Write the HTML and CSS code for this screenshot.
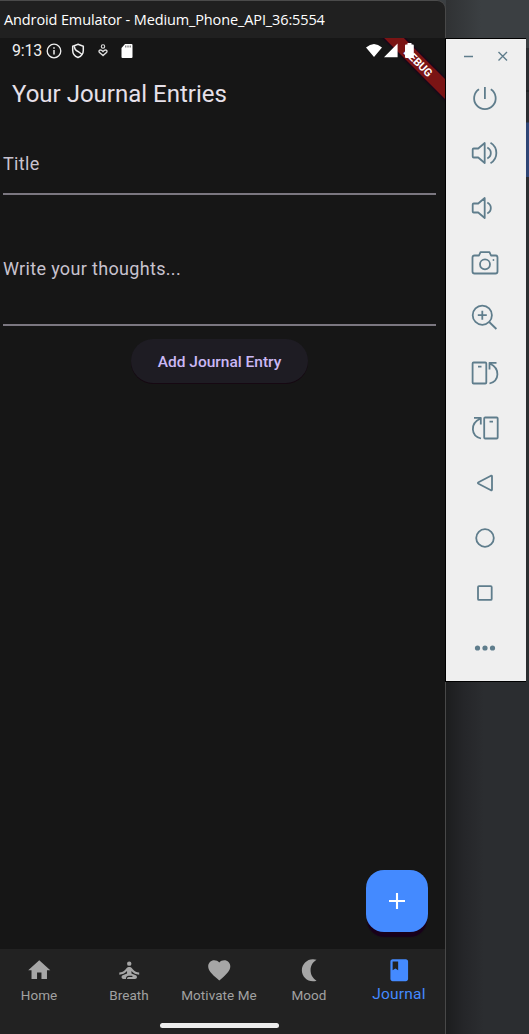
FILE: index.html
```html
<!DOCTYPE html>
<html lang="en">
<head>
<meta charset="utf-8">
<title>Android Emulator</title>
<link rel="stylesheet" href="styles.css">
</head>
<body>
<div class="desktop">
  <main class="window">
    <header class="titlebar"><span>Android Emulator - Medium_Phone_API_36:5554</span></header>
    <div class="screen">
      <div class="debug"><span>DEBUG</span></div>
      <div class="status">
        <span class="clock">9:13</span>
        <svg class="s-info" width="16" height="16" viewBox="0 0 16 16"><circle cx="8" cy="8" r="6.800" fill="none" stroke="#eee" stroke-width="1.300"/><path d="M8 7v4.600M8 4.200v1.500" stroke="#eee" stroke-width="1.500"/></svg>
        <svg class="s-shield" width="14" height="16" viewBox="0 0 14 16"><path d="M7 1.200l5.300 2v4.300c0 3.300-2.200 5.800-5.300 7C3.900 13.300 1.700 10.800 1.700 7.500V3.200zM3.500 3.500q0 3.500 3.500 5l3.500 2.500" fill="none" stroke="#eee" stroke-width="1.500"/></svg>
        <svg class="s-heart" width="10" height="13" viewBox="0 0 10 13"><circle cx="5" cy="2.500" r="1.700" fill="none" stroke="#ddd" stroke-width="1.100"/><path d="M5 11.500L1.300 8.200C.2 6.500 2.500 4.800 5 7.500 7.500 4.800 9.800 6.500 8.700 8.200z" fill="none" stroke="#ddd" stroke-width="1.400"/></svg>
        <svg class="s-card" width="12" height="14" viewBox="0 0 12 14"><path d="M4 0h6.500Q11.500 0 11.500 1v12q0 1-1 1h-9q-1 0-1-1V4z" fill="#fff"/><path d="M4.800 1.500v2M7 1.500v2M9.200 1.500v2" stroke="#555" stroke-width="1"/></svg>
        <span class="spacer"></span>
        <svg width="32" height="16" viewBox="0 0 32 16"><path d="M0 4.600Q8-2.400 16 4.600L8 14zM18 14.200L31.600 .6v13.600z" fill="#fff"/></svg>
        <svg class="s-bat" width="9" height="16" viewBox="0 0 9 16"><path d="M2.500 0h4v1.500H8q.8 0 .8 1V14q0 1-1 1H1q-1 0-1-1V2.500q0-1 1-1h1.500z" fill="#fff"/></svg>
      </div>
      <h1 class="heading"><span>Your Journal Entries</span></h1>
      <form class="entry">
        <label class="field field-title"><span>Title</span></label>
        <label class="field field-body"><span>Write your thoughts...</span></label>
        <button class="add" type="button"><span>Add Journal Entry</span></button>
      </form>
      <div class="content">
        <button class="fab" type="button" aria-label="Add"><svg width="16" height="16" viewBox="0 0 16 16"><path d="M8 0v16M0 8h16" stroke="#fff" stroke-width="2.100"/></svg></button>
      </div>
      <nav class="nav">
        <div class="tabs">
          <div class="tab"><svg viewBox="0 0 24 24"><path d="M10 20v-6h4v6h5v-8h3L12 3 2 12h3v8z"/></svg><span>Home</span></div>
          <div class="tab"><svg viewBox="0 0 24 24"><circle cx="12" cy="6" r="2"/><path d="M21 16v-2c-2.240 0-4.160-.960-5.600-2.680l-1.340-1.600A1.980 1.980 0 0 0 12.530 9h-1.050c-.610 0-1.170.260-1.550.720l-1.340 1.600C7.160 13.040 5.240 14 3 14v2c2.770 0 5.190-1.170 7-3.250V15l-3.880 1.550C5.450 16.820 5 17.480 5 18.210 5 19.200 5.800 20 6.790 20H9v-.5c0-1.380 1.120-2.500 2.500-2.500h3c.280 0 .5.220.5.5s-.220.5-.5.5h-3c-.830 0-1.500.670-1.500 1.500v.5h7.210c.990 0 1.790-.8 1.790-1.790 0-.730-.450-1.390-1.120-1.660L14 15v-2.250c1.810 2.080 4.230 3.250 7 3.250z"/></svg><span>Breath</span></div>
          <div class="tab"><svg viewBox="0 0 24 24"><path d="M12 21.350l-1.450-1.320C5.400 15.360 2 12.280 2 8.500 2 5.420 4.420 3 7.500 3c1.740 0 3.410.810 4.500 2.090C13.090 3.810 14.760 3 16.500 3 19.580 3 22 5.420 22 8.500c0 3.780-3.400 6.860-8.550 11.540z"/></svg><span>Motivate Me</span></div>
          <div class="tab"><svg viewBox="0 0 24 24"><path d="M15.300 2c1.200 0 2.300.2 3.300.6-3.300 2-5.400 5.400-5.400 9.400s2.100 7.400 5.400 9.400c-1 .4-2.100.6-3.300.6-5.500 0-10-4.500-10-10s4.500-10 10-10z"/></svg><span>Mood</span></div>
          <div class="tab active"><svg viewBox="0 0 24 24"><path fill-rule="evenodd" d="M18 2H6c-1.100 0-2 .9-2 2v16c0 1.100.9 2 2 2h12c1.100 0 2-.9 2-2V4c0-1.100-.9-2-2-2zM6 4h5v8l-2.500-1.500L6 12z"/></svg><span>Journal</span></div>
        </div>
        <div class="handle"></div>
      </nav>
    </div>
  </main>
  <div class="side">
    <div class="backdrop-top"></div>
    <div class="middle">
      <aside class="toolbar">
        <div class="controls">
          <svg width="80" height="32" viewBox="0 0 80 32"><path d="M18 17.500h9M52.500 13l8.500 8.500M61 13L52.500 21.500" fill="none" stroke="#5f7d8c" stroke-width="1.400"/></svg>
        </div>
        <div class="tool"><svg viewBox="0 0 34 33"><path d="M10 7.200a10.800 10.800 0 1 0 11.800 0M15.900 5v12"/></svg></div>
        <div class="tool"><svg viewBox="0 0 34 33"><path d="M3.700 12.500q0-1 1-1h4.500L15.700 6v20l-6.500-5.500H4.700q-1 0-1-1zM18.300 10.500C23 13 23 19 18.300 21.500M21.500 5.700C29.300 10.500 29.300 21.500 21.500 26.300"/></svg></div>
        <div class="tool"><svg viewBox="0 0 34 33"><path d="M3.700 12.500q0-1 1-1h4.500L15.700 6v20l-6.500-5.500H4.700q-1 0-1-1zM18.300 10.500C23 13 23 19 18.300 21.500"/></svg></div>
        <div class="tool"><svg viewBox="0 0 34 33"><path d="M5.500 8.500H10l1.500-3.300h9L22 8.500h4.500q2 0 2 2v14q0 2-2 2h-21q-2 0-2-2v-14q0-2 2-2z"/><circle cx="16" cy="17.300" r="5"/><path d="M23.700 13h1.500"/></svg></div>
        <div class="tool"><svg viewBox="0 0 34 33"><circle cx="13.300" cy="13.200" r="9.600"/><path d="M20.200 20l7.200 7M13.300 8.700v9M8.800 13.200h9"/></svg></div>
        <div class="tool"><svg viewBox="0 0 34 33"><rect x="3.600" y="5.500" width="13.700" height="21" rx="1"/><path d="M9 9.600h3.500M20.500 26.500C30.500 24 31.500 11.500 20.800 6.500M27.500 5.800H20.500v6.700"/></svg></div>
        <div class="tool"><svg viewBox="0 0 34 33"><rect x="15.200" y="5.500" width="13.500" height="21" rx="1"/><path d="M20.500 9.600H24M12 26.500C2 24 .5 11.500 11.500 6.500M5 5.800h6.800v6.700"/></svg></div>
        <div class="tool"><svg viewBox="0 0 34 33"><path d="M9.500 15.200L22 8.700q1-.3 1 .8v13q0 1.100-1 .8L9.500 16.800q-1.300-.8 0-1.600z"/></svg></div>
        <div class="tool"><svg viewBox="0 0 34 33"><circle cx="16" cy="16" r="8.800"/></svg></div>
        <div class="tool"><svg viewBox="0 0 34 33"><rect x="9" y="9.200" width="13.700" height="13.700" rx="1"/></svg></div>
        <div class="tool"><svg viewBox="0 0 34 33"><g fill="#5f7d8c" stroke="none"><circle cx="8.500" cy="16" r="2.600"/><circle cx="16" cy="16" r="2.600"/><circle cx="23.500" cy="16" r="2.600"/></g></svg></div>
      </aside>
      <div class="edge"></div>
    </div>
    <div class="backdrop-bottom"></div>
  </div>
</div>
</body>
</html>
```

FILE: styles.css
```css
* { box-sizing: border-box; }
body { margin: 0; background: #2b2d30; font-family: Roboto, sans-serif; }
button { border: 0; padding: 0; font-family: inherit; }
svg { display: block; flex: none; }
span { white-space: nowrap; }

.desktop { display: flex; width: 529px; height: 1034px; overflow: hidden; background: #3b3f42; }
.window {
  display: flex; flex-direction: column; width: 446px; height: 1034px;
  border-top: 1px solid #4b4b4b; border-right: 1px solid #484848;
  border-radius: 0 9px 0 0; overflow: hidden; background: #202020;
}
.titlebar {
  height: 37px; padding-left: 4px; line-height: 37px; color: #fff;
  font-family: "Open Sans", sans-serif; font-size: 14.500px; letter-spacing: -0.120px;
}
.screen { position: relative; display: flex; flex-direction: column; flex: 1; overflow: hidden; background: #161616; }

.debug {
  position: absolute; top: 18px; left: 359px; width: 120px; height: 14px;
  display: flex; align-items: center; justify-content: center; padding-right: 2px;
  background: #7a1414; box-shadow: 0 0 2px 1px #18001c;
  transform: rotate(45deg); color: #fff; font-size: 11px; font-weight: 700;
}
.status { position: relative; display: flex; align-items: center; height: 25px; padding: 0 31px 0 12px; }
.clock { width: 34px; color: #f0f0f0; font-size: 16px; letter-spacing: -0.200px; }
.s-shield { margin-left: 9px; }
.s-heart { margin-left: 13px; }
.s-card { margin-left: 13px; }
.s-bat { margin-left: 7px; }
.spacer { flex: 1; }

.heading { margin: 0; height: 63px; padding-left: 12px; line-height: 63px; color: #e6e0e9; font-size: 24px; font-weight: 400; }
.entry { display: flex; flex-direction: column; align-items: center; }
.field { width: 433px; margin-left: -6px; border-bottom: 2px solid #7b7780; color: #c8c2ce; font-size: 18px; letter-spacing: .33px; }
.field-title { height: 69px; padding-top: 27px; }
.field-body { height: 131px; padding-top: 63px; }
.add {
  width: 177px; height: 44px; margin: 13px 0 0 -6px; padding-top: 2px; border-radius: 22px;
  background: #1e1c23; box-shadow: 0 1px 0 #160812; color: #cbb8f5; font-size: 15.500px; font-weight: 500;
}
.content { display: flex; flex: 1; align-items: flex-end; justify-content: flex-end; padding: 0 17.500px 17px 0; }
.fab {
  display: flex; align-items: center; justify-content: center; width: 61.500px; height: 62px;
  border-radius: 18px; background: #448aff; box-shadow: 0 6px 1px -1px #18001a;
}
.nav { height: 85px; background: #222; display: flex; flex-direction: column; align-items: center; }
.tabs { display: flex; width: 450px; height: 75px; margin-left: -6px; align-self: flex-start; }
.tab { display: flex; flex-direction: column; align-items: center; width: 90px; padding-top: 8px; color: #a1a1a1; font-size: 13.500px; letter-spacing: .08px; }
.tab svg { width: 26.500px; height: 26.500px; fill: #a6a6a6; }
.tab span { margin-top: 3px; line-height: 16px; }
.tab.active { color: #448aff; font-size: 15.500px; letter-spacing: .2px; }
.tab.active svg { fill: #448aff; }
.tab.active span { margin-top: 2.500px; }
.handle { width: 119px; height: 5px; margin: -1px 0 0 -7px; border-radius: 3px; background: #ededed; }

.side { display: flex; flex-direction: column; width: 83px; }
.backdrop-top { height: 38px; background: linear-gradient(90deg, #303234, #3b3f42 35px); }
.middle { display: flex; height: 644px; }
.toolbar { width: 80px; margin-left: -1px; box-sizing: content-box; border: 1px solid #000; border-right: 0; background: #efefef; position: relative; }
.controls { height: 32px; }
.tool { display: flex; height: 55px; padding: 11px 0 0 23px; }
.tool svg { width: 34px; height: 33px; fill: none; stroke: #5f7d8c; stroke-width: 1.800; stroke-linejoin: round; }
.edge { flex: 1; background: linear-gradient(#3b3f42 10px, #2b2c30 10px 52px, #1f2023 52px 54px, #2b2c30 54px 84px, #2e4474 85px 139px, #2b2d30 139px); }
.backdrop-bottom { flex: 1; background: linear-gradient(90deg, #1c1d1e, #252629 18px, #2b2d30 38px); }
```
